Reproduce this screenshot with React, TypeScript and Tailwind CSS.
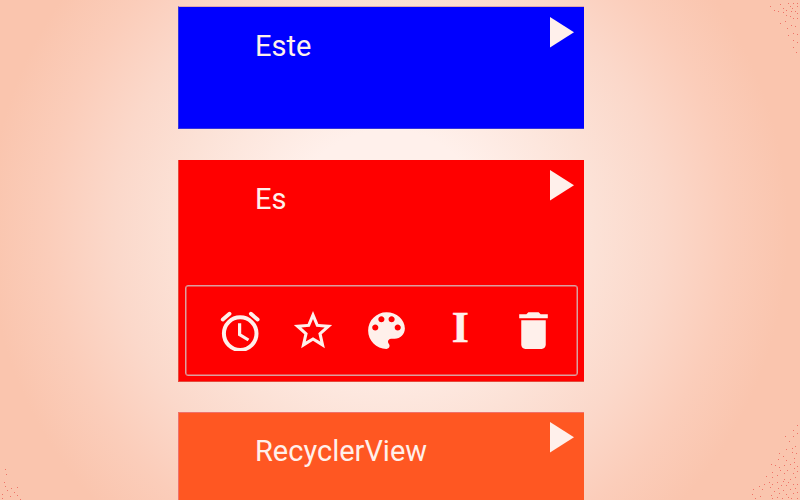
import React from "react";

const cream = "#fff0eb";

const speckles: [number, number][] = [
  [788, 3], [793, 3], [797, 3], [780, 4], [770, 6], [790, 6], [797, 6], [783, 8], [792, 8],
  [774, 10], [778, 11], [786, 10], [791, 11], [795, 11], [783, 12], [797, 13], [786, 15],
  [790, 16], [793, 18], [797, 18], [785, 21], [780, 23], [791, 25], [795, 26], [787, 28],
  [793, 33], [797, 34], [788, 35], [793, 40], [797, 42], [793, 47], [796, 52],
  [5, 469], [6, 474], [4, 482], [5, 486], [11, 488], [7, 490], [17, 487], [14, 492],
  [2, 494], [10, 496], [17, 495], [2, 498], [20, 499],
  [805, 417], [797, 425], [793, 430], [785, 436], [793, 436], [797, 433], [789, 441],
  [795, 446], [786, 449], [792, 448], [792, 452], [796, 453], [779, 453], [783, 456],
  [778, 459], [786, 460], [794, 458], [771, 464], [775, 465], [779, 467], [784, 465],
  [790, 464], [794, 462], [797, 466], [780, 470], [787, 470], [794, 468], [784, 473],
  [772, 472], [793, 473], [797, 471], [777, 475], [766, 476], [772, 477], [784, 479],
  [790, 479], [795, 477], [769, 482], [777, 482], [783, 481], [788, 482], [793, 484],
  [759, 486], [764, 484], [772, 484], [781, 485], [786, 485], [797, 484], [753, 489],
  [762, 489], [770, 487], [778, 488], [783, 490], [790, 489], [795, 488], [752, 494],
  [774, 491], [771, 495], [779, 493], [786, 494], [793, 493], [797, 492], [755, 498],
  [760, 496], [772, 498], [777, 497], [782, 498], [788, 497], [791, 498], [797, 498],
];

function Speckles() {
  return (
    <svg className="pointer-events-none absolute inset-0" width="800" height="500" shapeRendering="crispEdges">
      {speckles.map(([x, y]) => (
        <rect key={`${x}-${y}`} x={x} y={y} width="1" height="1" fill="#ee7468" />
      ))}
    </svg>
  );
}

function Play() {
  return (
    <svg width="24" height="31" viewBox="0 0 24 31" fill={cream} className="block shrink-0">
      <path d="M0 0L24 15.2L0 30.6z" />
    </svg>
  );
}

function Header({ title }: { title: string }) {
  return (
    <div className="flex items-start justify-between pl-[76px] pr-[10px] pt-[9px]">
      <h2 className="mt-[13px] text-[29px] leading-8 font-normal">{title}</h2>
      <Play />
    </div>
  );
}

function Alarm() {
  return (
    <svg width="40" height="40" viewBox="220 310 40 40" fill="none" stroke={cream} strokeWidth="4" className="block">
      <circle cx="240.2" cy="332.6" r="16.3" />
      <path d="M239.6 322.3V333.6L248.5 339" strokeWidth="3.2" />
      <path d="M222.8 318.5L229.5 312.8M250.9 312.8L257.6 318.5" strokeLinecap="round" strokeWidth="3.9" />
    </svg>
  );
}

function Star() {
  return (
    <svg width="46" height="47" viewBox="0 0 24 24" preserveAspectRatio="none" fill={cream} className="block">
      <path d="M22 9.24l-7.19-.62L12 2 9.19 8.63 2 9.24l5.46 4.73L5.82 21 12 17.27 18.18 21l-1.63-7.03L22 9.24zM12 15.4l-3.76 2.27 1-4.28-3.32-2.88 4.38-.38L12 6.1l1.71 4.04 4.38.38-3.32 2.88 1 4.28L12 15.4z" />
    </svg>
  );
}

function Palette() {
  return (
    <svg width="49" height="49" viewBox="0 0 24 24" fill={cream} className="block">
      <path d="M12 3c-4.97 0-9 4.03-9 9s4.03 9 9 9c.83 0 1.5-.67 1.5-1.5 0-.39-.15-.74-.39-1.01-.23-.26-.38-.61-.38-.99 0-.83.67-1.5 1.5-1.5H16c2.76 0 5-2.24 5-5 0-4.42-4.03-8-9-8zm-5.5 9c-.83 0-1.5-.67-1.5-1.5S5.67 9 6.5 9 8 9.67 8 10.5 7.33 12 6.5 12zm3-4C8.67 8 8 7.33 8 6.5S8.67 5 9.5 5s1.5.67 1.5 1.5S10.33 8 9.5 8zm5 0c-.83 0-1.5-.67-1.5-1.5S13.67 5 14.5 5s1.5.67 1.5 1.5S15.33 8 14.5 8zm3 4c-.83 0-1.5-.67-1.5-1.5S16.67 9 17.5 9s1.5.67 1.5 1.5-.67 1.5-1.5 1.5z" />
    </svg>
  );
}

function Trash() {
  return (
    <svg width="49" height="49" viewBox="0 0 24 24" fill={cream} className="block">
      <path d="M6 19c0 1.1.9 2 2 2h8c1.1 0 2-.9 2-2V7H6v12zM19 4h-3.5l-1-1h-5l-1 1H5v2h14V4z" />
    </svg>
  );
}

function Slot({ children }: { children: React.ReactNode }) {
  return <div className="flex w-[73.5px] shrink-0 items-center justify-center">{children}</div>;
}

export default function App() {
  return (
    <main className="relative h-[500px] w-[800px] overflow-hidden bg-[radial-gradient(circle_at_388px_230px,#fff0eb_0px,#fff0eb_100px,#fce2d7_205px,#fbd8ca_275px,#fbcdba_340px,#fac5ae_400px)] font-['Roboto',sans-serif] text-[#fff0eb]">
      <Speckles />
      <div className="relative ml-[178px] flex w-[406px] flex-col pt-[6px]">
        <section className="mb-[31px] h-[123px] border-y border-l border-t-[#e0a8ac] border-b-[#3434e0] border-l-[#3434e0] bg-[#0000ff] pt-[1px]">
          <Header title="Este" />
        </section>
        <section className="mb-[30px] flex h-[222px] flex-col justify-between border-b border-l border-[#e54a3c] bg-[#ff0000] pt-[1px] pb-[5px]">
          <Header title="Es" />
          <div className="ml-[6px] flex h-[91px] w-[393px] items-center rounded-[3px] border border-[#dba0a0] pl-[17px] shadow-[inset_0_0_0_0.5px_#dba0a0]">
            <Slot><Alarm /></Slot>
            <Slot><Star /></Slot>
            <Slot><Palette /></Slot>
            <Slot>
              <span className="pb-[5px] font-['Liberation_Serif',serif] text-[44px] leading-none font-bold [-webkit-text-stroke:0.4px_#fff0eb]">I</span>
            </Slot>
            <Slot><Trash /></Slot>
          </div>
        </section>
        <section className="h-[122px] border-l border-t border-[#f0716a] bg-[#ff5722]">
          <Header title="RecyclerView" />
        </section>
      </div>
    </main>
  );
}
